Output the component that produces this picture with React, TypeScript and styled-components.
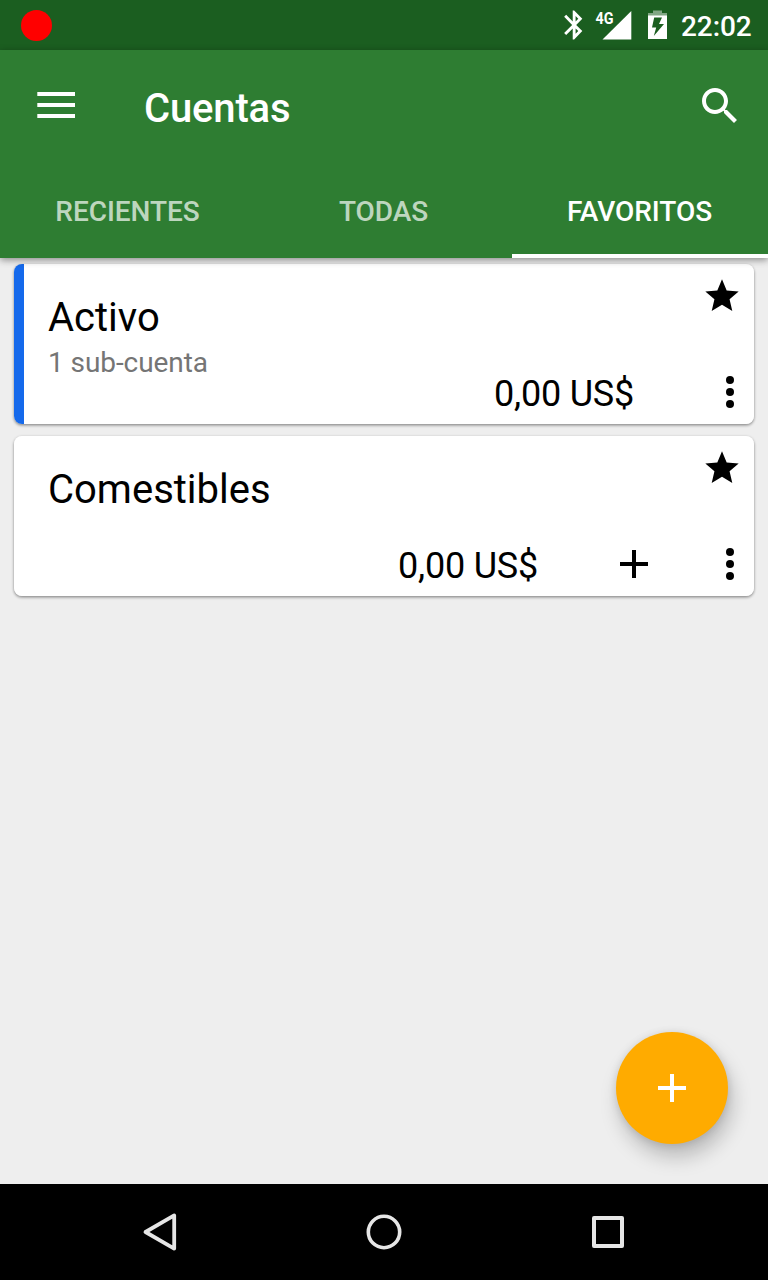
import React from "react";
import styled, { createGlobalStyle } from "styled-components";

const GlobalStyle = createGlobalStyle`
  * { box-sizing: border-box; }
  body {
    margin: 0;
    font-family: Roboto, sans-serif;
  }
`;

const Screen = styled.div`
  position: relative;
  display: flex;
  flex-direction: column;
  width: 768px;
  height: 1280px;
  overflow: hidden;
  background: #eeeeee;
`;

const StatusBar = styled.div`
  display: flex;
  align-items: center;
  height: 50px;
  padding: 0 16px 0 21px;
  background: #1b5e20;
  color: #fff;
`;

const RecordDot = styled.div`
  width: 31px;
  height: 31px;
  margin-right: auto;
  border-radius: 50%;
  background: #f00;
`;

const Icon = styled.svg`
  display: block;
  flex: none;
`;

const Clock = styled.span`
  width: 71px;
  margin-top: 3px;
  font-size: 28px;
  font-weight: 500;
  letter-spacing: -0.1px;
  line-height: 34px;
  white-space: nowrap;
`;

const Header = styled.header`
  z-index: 1;
  flex: none;
  background: #2e7d32;
  box-shadow: 0 2px 7px rgba(0, 0, 0, 0.42);
`;

const Toolbar = styled.div`
  display: flex;
  align-items: center;
  height: 112px;
  padding: 0 24px 0 32px;
`;

const Title = styled.h1`
  flex: 1;
  margin: 6px 0 0 64px;
  color: #fff;
  font-size: 40px;
  font-weight: 500;
  letter-spacing: -0.15px;
  line-height: 48px;
`;

const Tabs = styled.nav`
  display: grid;
  grid-template-columns: repeat(3, 1fr);
  height: 96px;
`;

const Tab = styled.div<{ $active?: boolean }>`
  display: flex;
  align-items: center;
  justify-content: center;
  padding-top: 6px;
  padding-right: 1px;
  border-bottom: 4px solid ${(p) => (p.$active ? "#fff" : "transparent")};
  color: ${(p) => (p.$active ? "#fff" : "rgba(255, 255, 255, 0.7)")};
  font-size: 28px;
  font-weight: 500;
  letter-spacing: -0.05px;
`;

const List = styled.main`
  display: flex;
  flex: 1;
  flex-direction: column;
  gap: 12px;
  padding: 6px 14px;
`;

const Card = styled.article<{ $accent?: string }>`
  display: flex;
  flex-direction: column;
  justify-content: space-between;
  height: 160px;
  padding: 12px 0 8px 34px;
  border-radius: 8px;
  background: linear-gradient(
    to right,
    ${(p) => p.$accent || "#fff"} 10px,
    #fff 10px
  );
  box-shadow: 0 1px 3px rgba(0, 0, 0, 0.36), 0 2px 3px rgba(0, 0, 0, 0.12);
`;

const CardTop = styled.div`
  display: flex;
  align-items: flex-start;
  justify-content: space-between;
  height: 92px;
  padding-right: 12px;
`;

const Names = styled.div`
  padding-top: 19px;
`;

const AccountName = styled.div`
  color: #000;
  font-size: 40px;
  line-height: 46px;
`;

const SubAccounts = styled.div`
  margin-top: 4px;
  color: #757575;
  font-size: 28px;
  letter-spacing: -0.08px;
  line-height: 36px;
`;

const CardBottom = styled.div`
  display: flex;
  align-items: center;
  justify-content: flex-end;
  height: 48px;
`;

const Balance = styled.span`
  margin-right: 72px;
  padding-top: 4px;
  color: #000;
  font-size: 36px;
  letter-spacing: -0.22px;
  line-height: 44px;
  white-space: nowrap;
`;

const AddSlot = styled.div`
  display: flex;
  width: 96px;
`;

const Fab = styled.button`
  position: absolute;
  right: 40px;
  bottom: 136px;
  display: flex;
  align-items: center;
  justify-content: center;
  width: 112px;
  height: 112px;
  padding: 0;
  border: 0;
  border-radius: 50%;
  background: #ffab00;
  box-shadow: 4px 13px 20px rgba(0, 0, 0, 0.22), 0 1px 8px rgba(0, 0, 0, 0.12);
`;

const NavBar = styled.footer`
  display: flex;
  flex: none;
  align-items: center;
  justify-content: center;
  gap: 176px;
  height: 96px;
  background: #000;
`;

const PlusIcon = ({ color }: { color: string }) => (
  <Icon width="48" height="48" viewBox="0 0 24 24" fill={color}>
    <path d="M19 13h-6v6h-2v-6H5v-2h6V5h2v6h6z" />
  </Icon>
);

const StarIcon = () => (
  <Icon width="40" height="40" viewBox="0 0 24 24">
    <path d="M12 17.27L18.18 21l-1.64-7.03L22 9.24l-7.19-.61L12 2 9.19 8.63 2 9.24l5.46 4.73L5.82 21z" />
  </Icon>
);

const MoreIcon = () => (
  <Icon width="48" height="48" viewBox="0 0 48 48">
    <circle cx="24" cy="12" r="4" />
    <circle cx="24" cy="24" r="4" />
    <circle cx="24" cy="36" r="4" />
  </Icon>
);

const StatusIcons = () => (
  <Icon width="121" height="50" viewBox="560 0 121 50" fill="#fff">
    <path
      transform="translate(557 7.5) scale(1.43 1.45)"
      d="M17.71 7.71L12 2h-1v7.59L6.41 5 5 6.41 10.59 12 5 17.59 6.41 19 11 14.41V22h1l5.71-5.71-4.3-4.29 4.3-4.29zM13 5.83l1.88 1.88L13 9.59V5.83zm1.88 10.46L13 18.17v-3.76l1.88 1.88z"
    />
    <path d="M631.3 11V39.5H602.5z" />
    <rect x="593" y="10" width="20.5" height="15.5" fill="#1b5e20" />
    <text
      x="595.5"
      y="23.6"
      fontSize="16.5"
      fontWeight="700"
      textLength="18"
      lengthAdjust="spacingAndGlyphs"
    >
      4G
    </text>
    <path d="M653 10.5h9V13h5v3h-19v-3h5z" opacity="0.45" />
    <path
      fillRule="evenodd"
      d="M648 15.5h19V39h-19zM654.2 17.5L652 27.5h4.2L653.8 36L664 24h-5L662 17.5z"
    />
  </Icon>
);

type Account = {
  name: string;
  children?: string;
  balance: string;
  accent?: string;
  canAdd?: boolean;
};

const accounts: Account[] = [
  { name: "Activo", children: "1 sub-cuenta", balance: "0,00 US$", accent: "#1569eb" },
  { name: "Comestibles", balance: "0,00 US$", canAdd: true },
];

const AccountCard = ({ account }: { account: Account }) => (
  <Card $accent={account.accent}>
    <CardTop>
      <Names>
        <AccountName>{account.name}</AccountName>
        {account.children && <SubAccounts>{account.children}</SubAccounts>}
      </Names>
      <StarIcon />
    </CardTop>
    <CardBottom>
      <Balance>{account.balance}</Balance>
      {account.canAdd && (
        <AddSlot>
          <PlusIcon color="#000" />
        </AddSlot>
      )}
      <MoreIcon />
    </CardBottom>
  </Card>
);

export default function App() {
  return (
    <Screen>
      <GlobalStyle />
      <StatusBar>
        <RecordDot />
        <StatusIcons />
        <Clock>22:02</Clock>
      </StatusBar>
      <Header>
        <Toolbar>
          <Icon width="48" height="48" viewBox="0 0 48 48" fill="#fff">
            <path d="M5.3 10H43v4H5.3zM5.3 21H43v4H5.3zM5.3 32H43v4H5.3z" />
          </Icon>
          <Title>Cuentas</Title>
          <Icon width="48" height="48" viewBox="0 0 24 24" fill="#fff">
            <path d="M15.5 14h-.79l-.28-.27C15.41 12.59 16 11.11 16 9.5 16 5.91 13.09 3 9.5 3S3 5.91 3 9.5 5.91 16 9.5 16c1.61 0 3.09-.59 4.23-1.57l.27.28v.79l5 4.99L20.49 19l-4.99-5zm-6 0C7.01 14 5 11.99 5 9.5S7.01 5 9.5 5 14 7.01 14 9.5 11.99 14 9.5 14z" />
          </Icon>
        </Toolbar>
        <Tabs>
          <Tab>RECIENTES</Tab>
          <Tab>TODAS</Tab>
          <Tab $active>FAVORITOS</Tab>
        </Tabs>
      </Header>
      <List>
        {accounts.map((a) => (
          <AccountCard key={a.name} account={a} />
        ))}
      </List>
      <Fab aria-label="Añadir">
        <PlusIcon color="#fff" />
      </Fab>
      <NavBar>
        <Icon width="48" height="48" viewBox="0 0 48 48" fill="none" stroke="#e6e6e6" strokeWidth="3.8" strokeLinejoin="round">
          <path d="M9.5 24L38.2 7.4V40.6z" />
        </Icon>
        <Icon width="48" height="48" viewBox="0 0 48 48" fill="none" stroke="#e6e6e6" strokeWidth="3.6">
          <circle cx="24" cy="24" r="15.7" />
        </Icon>
        <Icon width="48" height="48" viewBox="0 0 48 48" fill="none" stroke="#e6e6e6" strokeWidth="4" strokeLinejoin="round">
          <rect x="10" y="10" width="28" height="28" />
        </Icon>
      </NavBar>
    </Screen>
  );
}
